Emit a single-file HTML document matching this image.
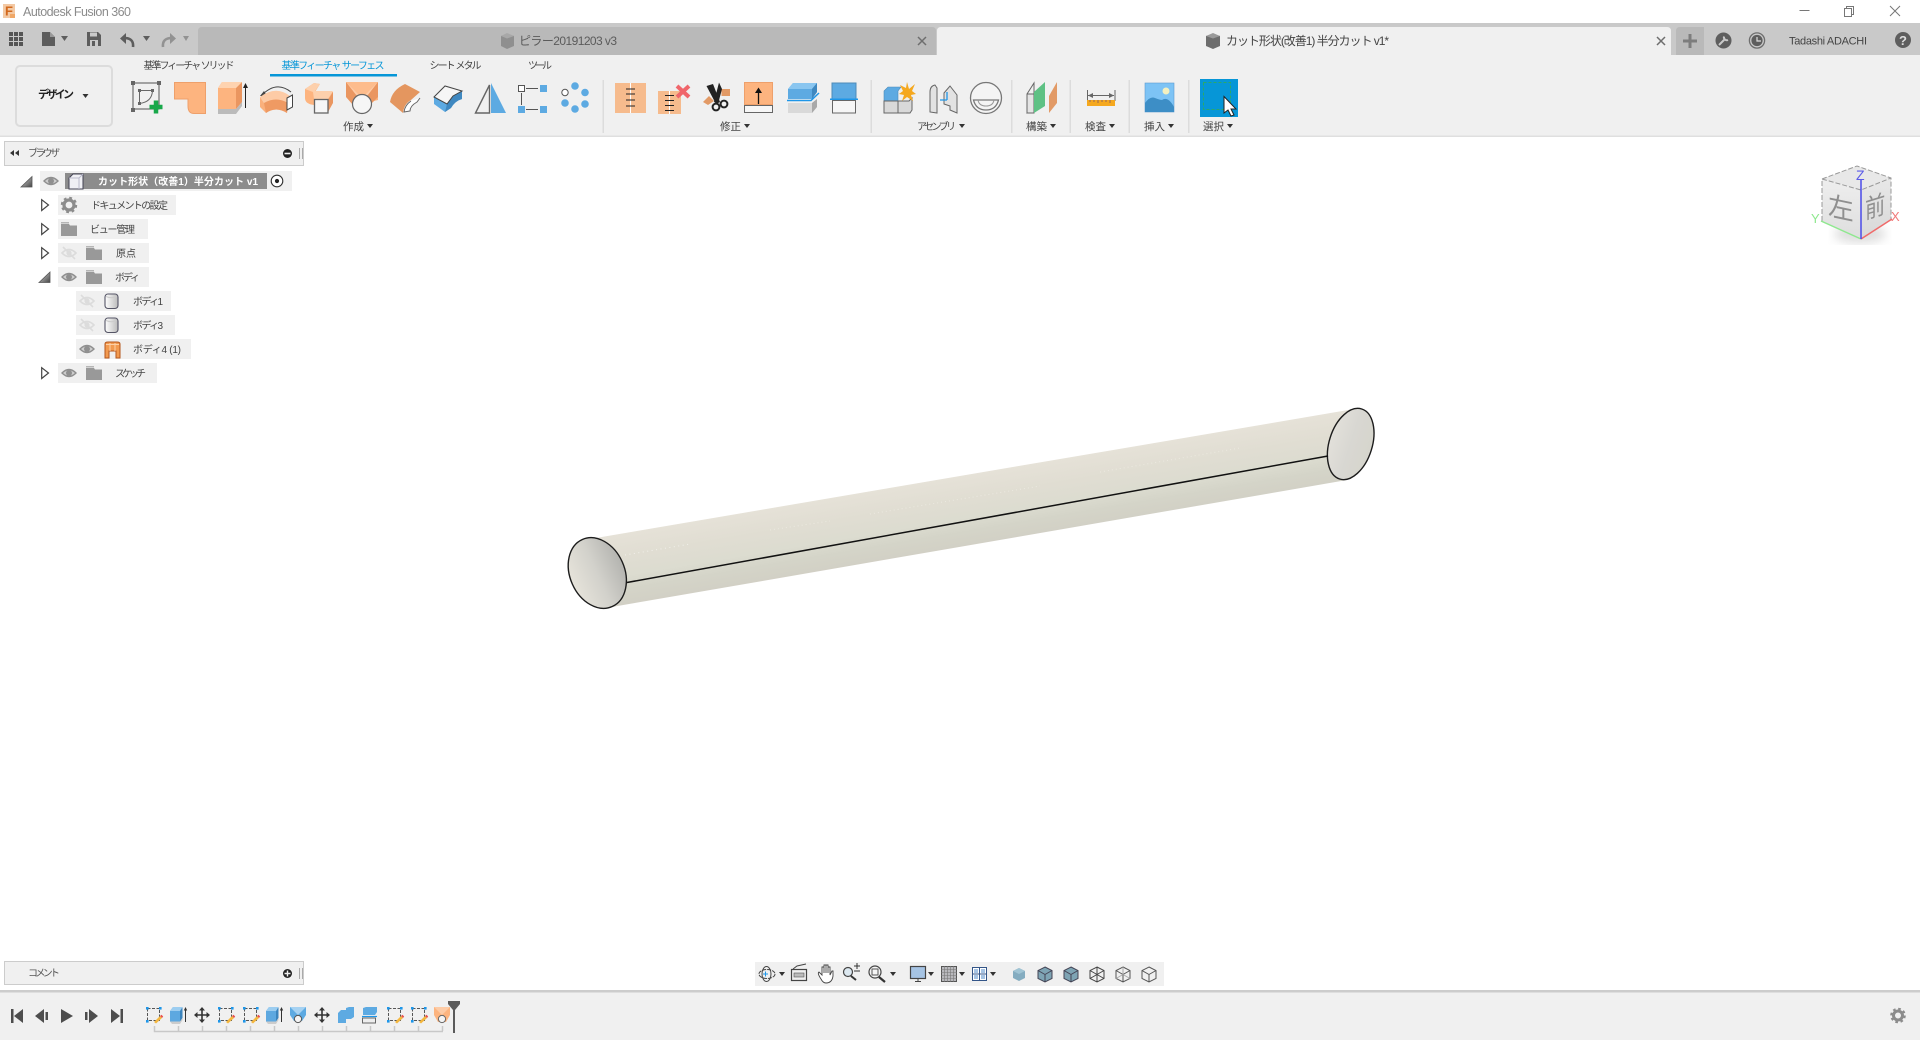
<!DOCTYPE html>
<html><head><meta charset="utf-8"><title>Autodesk Fusion 360</title>
<style>
html,body{margin:0;padding:0;background:#fff;width:1920px;height:1040px;overflow:hidden}
svg{display:block;filter:blur(.3px)}
text{font-family:"Liberation Sans","Noto Sans CJK JP",sans-serif;fill:#444;font-size:10px}
</style></head><body>
<svg width="1920" height="1040" viewBox="0 0 1920 1040" xmlns="http://www.w3.org/2000/svg">
<defs>
<linearGradient id="body" gradientUnits="userSpaceOnUse" x1="968" y1="473" x2="980" y2="544">
<stop offset="0" stop-color="#e6e2d8"/><stop offset=".35" stop-color="#e0ddd2"/><stop offset=".6" stop-color="#dcdcd0"/><stop offset=".8" stop-color="#d4d4c8"/><stop offset="1" stop-color="#d2d0c5"/></linearGradient>
<linearGradient id="capL" x1="0" y1="0" x2="0" y2="1"><stop offset="0" stop-color="#b4b4b0"/><stop offset=".5" stop-color="#d2d1cb"/><stop offset="1" stop-color="#e6e3da"/></linearGradient>
<linearGradient id="capR" x1="0" y1="0" x2="0" y2="1"><stop offset="0" stop-color="#e2e0da"/><stop offset=".5" stop-color="#d8d7d2"/><stop offset="1" stop-color="#d6d5cc"/></linearGradient>
<linearGradient id="cubeL" x1="0" y1="0" x2="0" y2="1"><stop offset="0" stop-color="#eeeeee"/><stop offset="1" stop-color="#dedede"/></linearGradient>
<linearGradient id="cubeR" x1="0" y1="0" x2="0" y2="1"><stop offset="0" stop-color="#e8e8e8"/><stop offset="1" stop-color="#d8d8d8"/></linearGradient>
<linearGradient id="tri" x1="0" y1="0" x2="1" y2="1"><stop offset="0" stop-color="#ddd"/><stop offset="1" stop-color="#444"/></linearGradient>
<linearGradient id="bodyI" x1="0" y1="0" x2="1" y2="0"><stop offset="0" stop-color="#fff"/><stop offset="1" stop-color="#bbb"/></linearGradient>
<filter id="bl"><feGaussianBlur stdDeviation="5"/></filter>
<filter id="sf"><feGaussianBlur stdDeviation=".35"/></filter>
<symbol id="eye" overflow="visible"><path d="M-7 0Q0-7 7 0Q0 7-7 0Z" fill="#ccc" stroke="#8f8f8f" stroke-width="1.4"/><circle r="3" fill="#8f8f8f"/></symbol>
<symbol id="eyeoff" overflow="visible"><path d="M-7 0Q0-7 7 0Q0 7-7 0Z" fill="none" stroke="#dcdcdc" stroke-width="1.6"/><circle r="2.6" fill="#dcdcdc"/><path d="M-6-6L6 6" stroke="#dcdcdc" stroke-width="1.6"/></symbol>
<symbol id="folder" overflow="visible"><path d="M0 0H8V1.5H0Z" fill="#b5b5b5"/><path d="M0 2H8L9 3.5H16V14H0Z" fill="#999"/></symbol>
<symbol id="tr" overflow="visible"><path d="M.7.7L7.5 6L.7 11.5Z" fill="#fff" stroke="#444" stroke-width="1.2"/></symbol>
<symbol id="tc" overflow="visible"><path d="M0 10.5L11 0V10.5Z" fill="url(#tri)" stroke="#555" stroke-width=".8"/></symbol>
<symbol id="bd" overflow="visible"><rect x="1" y="1" width="13" height="14.5" rx="3" fill="url(#bodyI)" stroke="#556" stroke-width="1.1"/><path d="M2 3.5Q7.5 6 13 3.5" fill="none" stroke="#ccc"/></symbol>
<symbol id="sk" overflow="visible"><rect x="1.5" y="1.5" width="12" height="12" fill="none" stroke="#555" stroke-width="1" stroke-dasharray="3 1.5"/><g fill="#1e96e8"><rect x="0" y="0" width="2.6" height="2.6"/><rect x="13" y="0" width="2.6" height="2.6"/><rect x="0" y="13" width="2.6" height="2.6"/></g><path d="M8 15L14 9L16 11L10 16.5Z" fill="#f4b73f"/><path d="M14 9L15.5 7.7L17.2 9.5L16 11Z" fill="#e8504f"/></symbol>
<symbol id="exb" overflow="visible"><path d="M0 4L3 0H12V11L10 14.500H0Z" fill="#5da8e0"/><path d="M10 4L12.500 0V11L10 14.500Z" fill="#3b84bd"/><path d="M0 4L3 0H12.500L10 4Z" fill="#9ccdf0"/><path d="M0 14.500H10L12.500 11V13L10 17H2Z" fill="#ccc"/><path d="M15.500 1V15" stroke="#333" stroke-width="1"/><path d="M13.800 3.500L15.500 0L17.200 3.500Z" fill="#333"/></symbol>
<symbol id="mv" overflow="visible"><path d="M0 0M-7 0H7M0-7V7" stroke="#333" stroke-width="1.6"/><path d="M0-8L-3-4.500H3ZM0 8L-3 4.500H3ZM-8 0L-4.500-3V3ZM8 0L4.500-3V3Z" fill="#333"/></symbol>
</defs>

<!-- window chrome -->
<rect width="1920" height="1040" fill="#fff"/>
<rect x="3" y="4" width="12" height="14" fill="#f3c9a4"/>
<rect x="10" y="14" width="5" height="4" fill="#f0a868"/>
<text x="5" y="15.500" style="font-size:13px;font-weight:bold;fill:#d2691e">F</text>
<text x="23" y="16" style="font-size:12.500px;fill:#8b8b8b" textLength="108">Autodesk Fusion 360</text>
<path d="M1799.500 10.500H1809.500" stroke="#777"/>
<path d="M1844.500 8.500H1851.500V16.500H1844.500ZM1846.500 8.500V6.500H1853.500V14.500H1851.500" fill="none" stroke="#777"/>
<path d="M1890 6L1900 16M1900 6L1890 16" stroke="#777"/>

<rect y="23" width="1920" height="32" fill="#c9c9c9"/>
<path d="M198 55V31Q198 27 202 27H932Q936 27 936 31V55Z" fill="#b9b9b9"/>
<path d="M937 55V31Q937 27 941 27H1667Q1671 27 1671 31V55Z" fill="#f0f0f0"/>
<path d="M1676 55V31Q1676 27 1680 27H1704V55Z" fill="#b9b9b9"/>
<path d="M1690 34V48M1683 41H1697" stroke="#7d7d7d" stroke-width="3"/>

<!-- top left quick icons -->
<g fill="#555"><rect x="9" y="32" width="4" height="4"/><rect x="14" y="32" width="4" height="4"/><rect x="19" y="32" width="4" height="4"/><rect x="9" y="37" width="4" height="4"/><rect x="14" y="37" width="4" height="4"/><rect x="19" y="37" width="4" height="4"/><rect x="9" y="42" width="4" height="4"/><rect x="14" y="42" width="4" height="4"/><rect x="19" y="42" width="4" height="4"/></g>
<path d="M42 32H50L55 37V46H42Z" fill="#5d5d5d"/><path d="M50 32L55 37H50Z" fill="#999"/><path d="M61 36H68L64.500 41Z" fill="#5d5d5d"/>
<path d="M87 32H98L101 35V46H87Z" fill="#5d5d5d"/><rect x="90" y="32.500" width="7" height="4" fill="#c9c9c9"/><rect x="90" y="40" width="8" height="6" fill="#c9c9c9"/><rect x="92" y="41" width="3" height="5" fill="#5d5d5d"/>
<path d="M133 47Q134 38 124 38" fill="none" stroke="#5d5d5d" stroke-width="2.600"/><path d="M126 33L120 38.500L126 44Z" fill="#5d5d5d"/><path d="M143 36H150L146.500 41Z" fill="#5d5d5d"/>
<path d="M163 47Q162 38 172 38" fill="none" stroke="#929292" stroke-width="2.600"/><path d="M170 33L176 38.500L170 44Z" fill="#929292"/><path d="M183 36H189L186 41Z" fill="#929292"/>

<!-- tab titles -->
<path d="M507 34L514 36V46L507 49L501 46V36Z" fill="#8f8f8f"/><path d="M501 36L507 38.500L514 36L507 33Z" fill="#a8a8a8"/>
<text x="519" y="45" style="font-size:12px;fill:#5b5b5b" textLength="98">ピラー20191203 v3</text>
<path d="M918 37L926 45M926 37L918 45" stroke="#6e6e6e" stroke-width="1.500"/>
<path d="M1213 34L1220 36V46L1213 49L1206 46V36Z" fill="#6d6d6d"/><path d="M1206 36L1213 38.500L1220 36L1213 33Z" fill="#9a9a9a"/>
<text x="1226" y="45" style="font-size:12px;fill:#444" textLength="163">カット形状(改善1) 半分カット v1*</text>
<path d="M1657 37L1665 45M1665 37L1657 45" stroke="#6e6e6e" stroke-width="1.500"/>
<!-- right icons -->
<circle cx="1723.500" cy="40.500" r="8" fill="#5e5e5e"/><path d="M1719 45L1725 39M1724 36.500A3 3 0 0 0 1728 40" stroke="#c9c9c9" stroke-width="2" fill="none"/>
<circle cx="1757" cy="40.500" r="7.600" fill="#c9c9c9" stroke="#6e6e6e" stroke-width="1.300"/><circle cx="1757" cy="40.500" r="5.600" fill="#5e5e5e"/><path d="M1757 37V41H1761" fill="none" stroke="#ddd" stroke-width="1.200"/>
<text x="1789" y="44.500" style="font-size:11px;fill:#444" textLength="78">Tadashi ADACHI</text>
<circle cx="1903" cy="40" r="8" fill="#5e5e5e"/>
<text x="1899" y="45" style="font-size:13px;font-weight:bold;fill:#ddd">?</text>

<!-- toolbar -->
<rect y="55" width="1920" height="81" fill="#f0f0f0"/>
<rect y="135.500" width="1920" height="1.500" fill="#dfdfdf"/>
<rect x="16" y="66" width="96" height="60" rx="4" fill="#f0f0f0" stroke="#dcdcdc" stroke-width="2"/>
<text x="38" y="98" style="font-size:11px;fill:#222;font-weight:bold" textLength="36">デザイン</text>
<path d="M82.500 94H88.500L85.500 98Z" fill="#333"/>

<text x="143.500" y="69" textLength="91">基準フィーチャ&#160;&#160;ソリッド</text>
<text x="281.500" y="69" textLength="103" style="font-size:10px;fill:#0696d7">基準フィーチャ&#160;&#160;サーフェス</text>
<rect x="270" y="74" width="127" height="2.500" fill="#0696d7"/>
<text x="429.500" y="69" textLength="52">シート&#160;&#160;メタル</text>
<text x="528" y="69" textLength="24">ツール</text>

<!-- sketch -->
<path d="M133 83H159V109H133Z" fill="none" stroke="#555" stroke-width="1"/>
<g fill="#666"><rect x="131" y="81" width="4" height="4"/><rect x="157" y="81" width="4" height="4"/><rect x="131" y="108" width="4" height="4"/><rect x="138" y="89" width="3" height="3"/><rect x="151" y="89" width="3" height="3"/><rect x="138" y="102" width="3" height="3"/></g>
<path d="M139.500 90.500H152.500Q152 102 139.500 103.500Z" fill="none" stroke="#666"/>
<path d="M156 100.500V113.500M149.500 107H162.500" stroke="#18a84a" stroke-width="4.500"/>
<!-- form -->
<path d="M174.500 82.500H205.500V113.500H194Q188 113.500 188 106V99H174.500Z" fill="#fdb47f" stroke="#eea06b"/>
<!-- extrude -->
<path d="M218 88L222 82H242V102L236 109H218Z" fill="#fdb47f"/><path d="M236 88L242 82V102L236 109Z" fill="#ea9660"/><path d="M218 88L222 82H242L236 88Z" fill="#fed3b0"/>
<path d="M218 109H236L242 102V106L236 114H218Z" fill="#bbb"/>
<path d="M245.500 87V108" stroke="#222"/><path d="M243 88L245.500 83L248 88Z" fill="#222"/>
<!-- revolve -->
<path d="M261 96Q276 80 291 92" fill="none" stroke="#444"/><path d="M264 91L260 96L267 96Z" fill="#444"/>
<path d="M260 97Q276 85 290 96L288 103Q276 96 264 103Z" fill="#fdcba6"/>
<path d="M260 97L264 103Q276 96 288 103L287 113Q276 106 266 113L260 107Z" fill="#fab07c"/><path d="M264 103Q276 96 288 103L287 113Q276 106 266 113Z" fill="#ef9a63"/>
<path d="M287 98L292.500 95V107L287 110Z" fill="#fff" stroke="#444"/>
<!-- sweep -->
<path d="M305 89L314 83L320 84L315 92H333V101L328 112V100H314V105Q305 104 305 98Z" fill="#fdb47f"/>
<path d="M305 89L314 83L320 84L315 91H333L328 99H314L313 92Z" fill="#fdd0ac"/>
<path d="M328 100L333 92V103L328 112Z" fill="#ea9660"/>
<rect x="314.500" y="99.500" width="13.500" height="13.500" fill="#f6f6f6" stroke="#666" stroke-width="1.300"/>
<!-- loft -->
<path d="M346 82H378V100L362 104L351 102Z" fill="#fdb47f"/><path d="M346 82L354 102L346 92Z" fill="#ea9660"/><path d="M378 82L369 102L378 92Z" fill="#ea9660"/><path d="M346 82L358 98H366L378 82Z" fill="#fdcba6"/><path d="M346 82V97L353 105L360 100Z" fill="#ea9660"/><path d="M378 82V97L370 105L364 100Z" fill="#ea9660"/><path d="M346 82L362 98L378 82Z" fill="#fdbc8c"/>
<circle cx="362" cy="104" r="9.500" fill="#f6f6f6" stroke="#666" stroke-width="1.200"/>
<!-- rib -->
<path d="M390 102Q392 90 405 84L420 92L411 100Q404 104 403 113Z" fill="#e4965f"/>
<path d="M411 101Q405 105 404 112L410 111Q410 106 417 102L420 98" fill="#fff" stroke="#666"/>
<!-- web -->
<path d="M434 97L447 104L453 96L462 91V99Q455 101 451 108L445 112L434 104Z" fill="#5daae2"/>
<path d="M447 104L453 96L462 91V99Q455 101 451 108L445 112Z" fill="#3f88c0"/>
<path d="M434 97L445 86L462 91L453 96L447 104Z" fill="#f6f6f6" stroke="#444"/>
<!-- mirror -->
<path d="M475.500 113L489.500 85V113Z" fill="none" stroke="#666" stroke-width="1.400"/><path d="M491 83L506 113H491Z" fill="#5daae2"/>
<!-- pattern rect -->
<rect x="518.500" y="85.500" width="6" height="6" fill="#fff" stroke="#555"/><rect x="540" y="85" width="7" height="7" fill="#5daae2"/><rect x="518" y="106" width="7" height="7" fill="#5daae2"/><rect x="540" y="106" width="7" height="7" fill="#5daae2"/><path d="M526 88.500H538M521.500 93V105M526 109.500H538" stroke="#555"/>
<!-- pattern circ -->
<g fill="#5daae2"><circle cx="575" cy="86" r="3.800"/><circle cx="585" cy="92.500" r="3.800"/><circle cx="585" cy="104" r="3.800"/><circle cx="575" cy="109" r="3.800"/><circle cx="565" cy="103" r="3.800"/></g><circle cx="565" cy="92.500" r="3.200" fill="#fff" stroke="#555"/>
<rect x="602.500" y="80" width="1.500" height="53" fill="#dcdcdc"/>

<!-- modify -->
<rect x="615" y="83" width="31" height="30" fill="#f6bb8d"/><path d="M630.500 83V113" stroke="#fff"/>
<path d="M626 89H635M626 94H635M626 100H635M626 106H635" stroke="#222"/>
<rect x="658" y="91" width="23" height="23" fill="#f6bb8d"/><path d="M669.500 91V114" stroke="#fff"/><path d="M665 95.500H674M665 100.500H674M665 105.500H674M665 110.500H674" stroke="#222"/>
<path d="M677 86L689 97M689 86L677 97" stroke="#f0666b" stroke-width="4"/>
<!-- scissors -->
<rect x="721.500" y="89" width="8.500" height="7" fill="#e29a66"/><path d="M703 102L709 96L714 101L708 105Z" fill="#e29a66"/>
<path d="M706.500 86L713 84L720 102L716 104Z" fill="#222"/><path d="M719 82.500L722 89L718 104L714 102Z" fill="#222"/>
<circle cx="716" cy="107" r="3.400" fill="none" stroke="#222" stroke-width="2"/><circle cx="724" cy="104" r="3.400" fill="none" stroke="#222" stroke-width="2"/>
<rect x="744.500" y="82.500" width="28" height="22" fill="#fdb47f" stroke="#eea06b"/><rect x="744.500" y="105.500" width="28" height="7" fill="#f6f6f6" stroke="#666"/>
<path d="M758.500 92V104" stroke="#111" stroke-width="1.300"/><path d="M755 93L758.500 87.500L762 93Z" fill="#111"/>
<path d="M788 89L793 83H817V92L812 99H788Z" fill="#5daae2"/><path d="M788 89L793 83H817L812 89Z" fill="#8ac6f0"/><path d="M812 89L817 83V92L812 99Z" fill="#3f88c0"/>
<path d="M788 103H812L817 99V107L812 113H788Z" fill="#d9d9d9"/><path d="M812 103L817 99V107L812 113Z" fill="#a9a9a9"/>
<path d="M787 100.500H811L819 93" fill="none" stroke="#1e96e8" stroke-width="1.500"/>
<rect x="832" y="83" width="24" height="16" fill="#5daae2" stroke="#4e8bb8"/><rect x="830" y="98.500" width="28" height="1.500" fill="#1e96e8"/><rect x="832.500" y="100.500" width="23" height="12.500" fill="#f6f6f6" stroke="#666"/>
<rect x="870.500" y="80" width="1.500" height="53" fill="#dcdcdc"/>

<!-- assembly -->
<path d="M884 91L888 87H901L898 91V101H884Z" fill="#5daae2" stroke="#4e8bb8" stroke-width=".600"/>
<path d="M884 113V101H898V113ZM898 113V101H909L912 98V110L910 113Z" fill="#d9d9d9" stroke="#666"/>
<path d="M907 82L909 89L915 84L912 91L916 94L911 95L913 101L907 97L902 101L904 95L899 94L903 91L900 85L906 88Z" fill="#f5a81e"/>
<path d="M930 112V92Q930 86 935 85L937 88V113ZM944 93L950 86L957 95V113L950 110V106L944 104Z" fill="#e2e2e2" stroke="#666"/><path d="M947 92V100M940 100H947" stroke="#1e96e8" stroke-width="1.300"/>
<circle cx="986" cy="98" r="15.500" fill="#f4f4f4" stroke="#777" stroke-width="1.300"/><path d="M973.500 100H998.500Q996 110 986 110Q976 110 973.500 100Z" fill="#f4f4f4" stroke="#777" stroke-width="1.300"/><path d="M978 100Q979 106 986 106Q993 106 994 100" fill="none" stroke="#999"/>
<rect x="1011" y="80" width="1.500" height="53" fill="#dcdcdc"/>

<!-- construct -->
<path d="M1027 94L1034 83V109L1027 113Z" fill="#f0f0f0" stroke="#666"/><path d="M1027 94H1034V113H1027Z" fill="#e4e4e4" stroke="#666"/>
<path d="M1034 92L1045 82V106L1034 113Z" fill="#5ec184"/><path d="M1049 96L1057 82V103L1049 113Z" fill="#e29a66"/>
<rect x="1069.500" y="80" width="1.500" height="53" fill="#dcdcdc"/>

<!-- inspect -->
<path d="M1087.500 90V101M1115 90V101" stroke="#666"/><path d="M1088 95.500H1114" stroke="#666"/><path d="M1088 95.500L1093 93V98ZM1114 95.500L1109 93V98Z" fill="#666"/>
<rect x="1087" y="100" width="28" height="6" fill="#f5a81e"/><path d="M1090 100V102M1094 100V102M1098 100V103M1102 100V102M1106 100V102M1110 100V103" stroke="#965"/>
<rect x="1128.500" y="80" width="1.500" height="53" fill="#dcdcdc"/>

<!-- insert -->
<rect x="1145" y="83" width="29" height="29" fill="#7dc3f5" stroke="#5d9cd0" stroke-width=".600"/><path d="M1145 112V103Q1150 96 1155 98T1162 100Q1168 96 1174 107V112Z" fill="#3d8ec6"/><circle cx="1166" cy="91" r="3.500" fill="#f4f0c0"/>
<rect x="1188" y="80" width="1.500" height="53" fill="#dcdcdc"/>

<!-- select -->
<rect x="1200" y="79" width="38" height="38" fill="#0696d7"/>
<rect x="1203.500" y="82.500" width="27" height="27" fill="none" stroke="#2ba86a" stroke-dasharray="3 2"/>
<path d="M1224 96.500V113L1228 110L1231 116L1234 115L1231 109H1236Z" fill="#fff" stroke="#222"/>

<!-- group labels -->
<text x="343" y="130" style="font-size:10.500px" textLength="21">作成</text><path d="M367 124H373L370 128Z" fill="#333"/>
<text x="720" y="130" style="font-size:10.500px" textLength="21">修正</text><path d="M744 124H750L747 128Z" fill="#333"/>
<text x="917" y="130" textLength="39">アセンブリ</text><path d="M959 124H965L962 128Z" fill="#333"/>
<text x="1026" y="130" style="font-size:10.500px" textLength="21">構築</text><path d="M1050 124H1056L1053 128Z" fill="#333"/>
<text x="1085" y="130" style="font-size:10.500px" textLength="21">検査</text><path d="M1109 124H1115L1112 128Z" fill="#333"/>
<text x="1144" y="130" style="font-size:10.500px" textLength="21">挿入</text><path d="M1168 124H1174L1171 128Z" fill="#333"/>
<text x="1203" y="130" style="font-size:10.500px" textLength="21">選択</text><path d="M1227 124H1233L1230 128Z" fill="#333"/>

<!-- browser panel -->
<rect x="4.500" y="141.500" width="299" height="24" fill="#f0f0f0" stroke="#ccc"/>
<path d="M14 150V156L10 153ZM19 150V156L15 153Z" fill="#333"/>
<text x="28" y="156.500" style="fill:#555" textLength="32">ブラウザ</text>
<circle cx="287.500" cy="153.500" r="4.500" fill="#222"/><rect x="284.500" y="152.700" width="6" height="1.600" fill="#f0f0f0"/>
<path d="M299.500 148V159M302.500 148V159" stroke="#aaa"/>

<g fill="#f0f0f0">
<rect x="40" y="171" width="252" height="20"/><rect x="58" y="195" width="118" height="20"/><rect x="58" y="219" width="90" height="20"/><rect x="58" y="243" width="91" height="20"/><rect x="58" y="267" width="91" height="20"/><rect x="76" y="291" width="95" height="20"/><rect x="76" y="315" width="99" height="20"/><rect x="76" y="339" width="115" height="20"/><rect x="58" y="363" width="99" height="20"/>
</g>
<use href="#tc" x="21" y="176.500"/>
<use href="#eye" x="51" y="181"/>
<rect x="65" y="173" width="202" height="16" fill="#8c8c8c"/>
<path d="M69 189V178L73 174H83V189Z" fill="#f0f0f4" stroke="#445" stroke-width="1"/><path d="M69 178H79V189M79 178L83 174" fill="none" stroke="#bbc"/>
<text x="98" y="185" style="fill:#fff;font-weight:bold" textLength="160">カット形状（改善1）半分カット v1</text>
<circle cx="277" cy="181" r="5.800" fill="#fff" stroke="#333" stroke-width="1.100"/><circle cx="277" cy="181" r="2.100" fill="#222"/>

<use href="#tr" x="41" y="199"/>
<circle cx="69" cy="205" r="5" fill="none" stroke="#8c8c8c" stroke-width="3.200"/><circle cx="69" cy="205" r="7" fill="none" stroke="#8c8c8c" stroke-width="2.400" stroke-dasharray="2.750 2.750"/>
<text x="91" y="209" textLength="77">ドキュメントの設定</text>

<use href="#tr" x="41" y="223"/>
<use href="#folder" x="61" y="222"/>
<text x="90" y="233" textLength="45">ビュー管理</text>

<use href="#tr" x="41" y="247"/>
<use href="#eyeoff" x="69" y="253"/>
<use href="#folder" x="86" y="246"/>
<text x="116" y="257" textLength="20">原点</text>

<use href="#tc" x="39" y="272"/>
<use href="#eye" x="69" y="277"/>
<use href="#folder" x="86" y="270"/>
<text x="115" y="281" textLength="25">ボディ</text>

<use href="#eyeoff" x="87" y="301"/>
<use href="#bd" x="104" y="293"/>
<text x="133" y="305" textLength="30">ボディ1</text>
<use href="#eyeoff" x="87" y="325"/>
<use href="#bd" x="104" y="317"/>
<text x="133" y="329" textLength="30">ボディ3</text>
<use href="#eye" x="87" y="349"/>
<path d="M105 344Q105 342 108 342H117Q120 342 120 344V358H116V351H109V358H105Z" fill="#f29a4f" stroke="#b4561c"/><path d="M106 344.500H119M110 343V351M115 343V351" stroke="#fcd0a6"/>
<text x="133" y="353" textLength="48">ボディ4 (1)</text>

<use href="#tr" x="41" y="367"/>
<use href="#eye" x="69" y="373"/>
<use href="#folder" x="86" y="366"/>
<text x="115" y="377" textLength="31">スケッチ</text>

<!-- view cube -->
<ellipse cx="1860" cy="234" rx="26" ry="9" fill="#bbb" opacity=".5" filter="url(#bl)"/>
<path d="M1822 179L1861 190V239L1822 221Z" fill="url(#cubeL)"/>
<path d="M1861 190L1891 178V220L1861 239Z" fill="url(#cubeR)"/>
<path d="M1822 179L1857 166L1891 178L1861 190Z" fill="#e8e8e8"/>
<path d="M1822 221V179L1857 166L1891 178V220M1822 179L1861 190L1891 178" fill="none" stroke="#999" stroke-dasharray="5 2"/>
<text transform="matrix(.95 .2 0 1 1828 206)" y="9" style="font-size:27px;fill:#8f8f8f;font-family:'Noto Sans CJK SC',sans-serif">左</text>
<text transform="matrix(.78 -.24 0 1 1865 219)" style="font-size:26px;fill:#8f8f8f;font-family:'Noto Sans CJK SC',sans-serif">前</text>
<path d="M1861 239L1821 221" stroke="#8ee88e" stroke-width="1.500"/>
<path d="M1861 239L1892 219" stroke="#f06a6a" stroke-width="1.500"/>
<path d="M1861 239V180" stroke="#4a4ae8" stroke-width="1.500"/>
<text x="1856" y="180" style="font-size:14px;fill:#5c5ce8;font-family:'Liberation Sans',sans-serif">Z</text>
<text x="1811" y="223" style="font-size:13px;fill:#8ee88e">Y</text>
<text x="1891" y="221" style="font-size:13px;fill:#f07a7a">X</text>

<!-- cylinder -->
<path d="M590 539L1354 409L1347 480L606 608Z" fill="url(#body)"/>
<g filter="url(#sf)" opacity=".55"><path d="M625 555L690 544" stroke="#fff" stroke-dasharray="1 3.500"/><path d="M870 514L1040 486M770 530L830 521M1100 472L1240 448" stroke="#f5f3ec" stroke-dasharray="1 3"/></g>
<ellipse cx="597.300" cy="573" rx="36.700" ry="27.300" transform="rotate(66 597.300 573)" fill="url(#capL)" stroke="#1c1c1c" stroke-width="1.400"/>
<ellipse cx="1350.700" cy="444" rx="36.700" ry="21.500" transform="rotate(-72.500 1350.700 444)" fill="url(#capR)" stroke="#1c1c1c" stroke-width="1.400"/>
<path d="M627 582.500L1328 456" stroke="#111" stroke-width="1.500"/>

<!-- comment panel -->
<rect x="4.500" y="961.500" width="299" height="23" fill="#f0f0f0" stroke="#ccc"/>
<text x="28" y="976.500" style="fill:#555" textLength="32">コメント</text>
<circle cx="287.500" cy="973.500" r="4.500" fill="#222"/><path d="M284.500 973.500H290.500M287.500 970.500V976.500" stroke="#f0f0f0" stroke-width="1.400"/>
<path d="M299.500 968V979M302.500 968V979" stroke="#aaa"/>

<!-- nav bar -->
<rect x="755" y="962" width="409" height="24" fill="#f0f0f0"/>
<ellipse cx="767" cy="974" rx="8" ry="4.500" fill="none" stroke="#444" stroke-dasharray="4 1"/><ellipse cx="766.500" cy="974" rx="4.500" ry="7.500" fill="none" stroke="#444"/><path d="M763 974H768M765.500 971.500V976.500" stroke="#1e96e8"/>
<path d="M779 972H785L782 976Z" fill="#333"/>
<rect x="791.500" y="969.500" width="15" height="11" fill="none" stroke="#444" stroke-width="1.200"/><rect x="794" y="973" width="10" height="4" fill="#bbb" stroke="#555" stroke-width=".600"/><path d="M793 969L797 966L806 964" fill="none" stroke="#444"/>
<path d="M821 979Q817 973 819 972L822 975V967H824V973V965H826V973V965H828V973V967H830V975L832 971H833V976Q832 983 826 983Q823 983 821 979Z" fill="#fff" stroke="#444" stroke-width=".900"/>
<circle cx="848" cy="972" r="4.500" fill="#dce8f0" stroke="#444" stroke-width="1.200"/><path d="M851 976L856 980" stroke="#333" stroke-width="2"/><path d="M854 966H860M857 963V969M854 971H860" stroke="#333"/>
<circle cx="875" cy="972" r="6" fill="#f6f6f6" stroke="#444" stroke-width="1.200"/><rect x="872" y="969" width="6" height="6" fill="none" stroke="#555"/><path d="M879 977L885 982" stroke="#333" stroke-width="2.200"/>
<path d="M890 972H896L893 976Z" fill="#333"/>
<rect x="910.500" y="966.500" width="15" height="12" fill="#a6c4e4" stroke="#444" stroke-width="1.200"/><path d="M915 981.500H921M918 979V981" stroke="#444"/><path d="M928 972H934L931 976Z" fill="#333"/>
<rect x="941.500" y="966.500" width="15" height="15" fill="#b8b8bc" stroke="#555"/><path d="M944.500 966V982M947.500 966V982M950.500 966V982M953.500 966V982M941 969.500H957M941 972.500H957M941 975.500H957M941 978.500H957" stroke="#777" stroke-width=".600"/><path d="M959 972H965L962 976Z" fill="#333"/>
<rect x="972.500" y="967.500" width="14" height="13" fill="#fff" stroke="#335588"/><path d="M979.500 967V981M972 974H987" stroke="#335588"/><g fill="#a6c4e4"><rect x="974" y="969" width="4" height="4"/><rect x="981" y="969" width="4" height="4"/><rect x="974" y="975" width="4" height="4"/><rect x="981" y="975" width="4" height="4"/></g><path d="M990 972H996L993 976Z" fill="#333"/>
<path d="M1019 968L1025 971V978L1019 981L1013 978V971Z" fill="#84acc0"/><path d="M1019 968L1025 971L1019 974L1013 971Z" fill="#a0c4d4"/>
<path d="M1045 967L1052 970.500V978.500L1045 982L1038 978.500V970.500Z" fill="#7ea4b4" stroke="#445"/><path d="M1045 974.500L1038 970.500M1045 974.500L1052 970.500M1045 974.500V982" stroke="#445" fill="none"/>
<path d="M1071 967L1078 970.500V978.500L1071 982L1064 978.500V970.500Z" fill="#7ea4b4" stroke="#445"/><path d="M1071 974.500L1064 970.500M1071 974.500L1078 970.500M1071 974.500V982" stroke="#445" fill="none"/>
<g fill="none" stroke="#444"><path d="M1097 967L1104 970.500V978.500L1097 982L1090 978.500V970.500ZM1097 974.500L1090 970.500M1097 974.500L1104 970.500M1097 974.500V982M1097 974.500V967M1097 974.500L1090 978.500M1097 974.500L1104 978.500"/></g>
<g fill="none" stroke="#555"><path d="M1123 967L1130 970.500V978.500L1123 982L1116 978.500V970.500ZM1123 974.500L1116 970.500M1123 974.500L1130 970.500M1123 974.500V982"/><path d="M1123 974.500V967M1123 974.500L1116 978.500M1123 974.500L1130 978.500" stroke="#aaa"/></g>
<g fill="none" stroke="#555"><path d="M1149 967L1156 970.500V978.500L1149 982L1142 978.500V970.500ZM1149 974.500L1142 970.500M1149 974.500L1156 970.500M1149 974.500V982"/></g>

<!-- timeline -->
<rect y="990" width="1920" height="50" fill="#f0f0f0"/>
<rect y="990" width="1920" height="2.500" fill="#ccc"/>
<g fill="#4d4d4d">
<rect x="11" y="1009" width="2.500" height="14"/><path d="M23 1009V1023L14 1016Z"/>
<path d="M44 1009V1023L35 1016Z"/><rect x="45.500" y="1012" width="2.500" height="8"/>
<path d="M61 1009V1023L73 1016Z"/>
<rect x="85" y="1012" width="2.500" height="8"/><path d="M89 1009V1023L98 1016Z"/>
<path d="M111 1009V1023L120 1016Z"/><rect x="120.500" y="1009" width="2.500" height="14"/>
</g>
<use href="#sk" x="146" y="1007"/>
<use href="#exb" x="170" y="1007"/>
<use href="#mv" x="202" y="1015"/>
<use href="#sk" x="218" y="1007"/>
<use href="#sk" x="243" y="1007"/>
<use href="#exb" x="266" y="1007"/>
<path d="M290 1007H306V1015L302 1021H294L290 1015Z" fill="#5daae2"/><path d="M290 1007L298 1015L306 1007Z" fill="#a6d2f2"/><circle cx="298" cy="1019" r="3.600" fill="#f4f4f4" stroke="#555"/>
<use href="#mv" x="322" y="1015"/>
<path d="M338 1013L341 1010H346V1008L349 1007H354V1017L351 1019H346V1023H338Z" fill="#5daae2"/>
<path d="M363 1008L366 1007H377V1012L375 1015H363Z" fill="#5daae2"/><rect x="362.500" y="1018" width="13" height="5" fill="#eee" stroke="#666"/><path d="M362 1016.500H377" stroke="#1e96e8" stroke-width="1.200"/>
<use href="#sk" x="387" y="1007"/>
<use href="#sk" x="411" y="1007"/>
<path d="M434 1007H450V1015L446 1022L438 1022L434 1015Z" fill="#fdb47f"/><path d="M434 1007L442 1015L450 1007Z" fill="#fdcba6"/><circle cx="442" cy="1019" r="3.600" fill="#f4f4f4" stroke="#666"/>
<path d="M154.500 1026V1031.500H443M178.500 1026V1031M202.500 1026V1031M226.500 1026V1031M250.500 1026V1031M274.500 1026V1031M298.500 1026V1031M322.500 1026V1031M346.500 1026V1031M370.500 1026V1031M394.500 1026V1031M418.500 1026V1031M442.500 1026V1031" fill="none" stroke="#c8c8c8" stroke-width="1.500"/>
<path d="M448 1001H460V1004L455 1010V1033H453V1010L448 1004Z" fill="#5a5a5a"/>
<!-- settings gear -->
<circle cx="1898" cy="1015.500" r="4.500" fill="none" stroke="#8c8c8c" stroke-width="3"/><circle cx="1898" cy="1015.500" r="6.700" fill="none" stroke="#8c8c8c" stroke-width="2.200" stroke-dasharray="2.630 2.630"/>
</svg>
</body></html>
